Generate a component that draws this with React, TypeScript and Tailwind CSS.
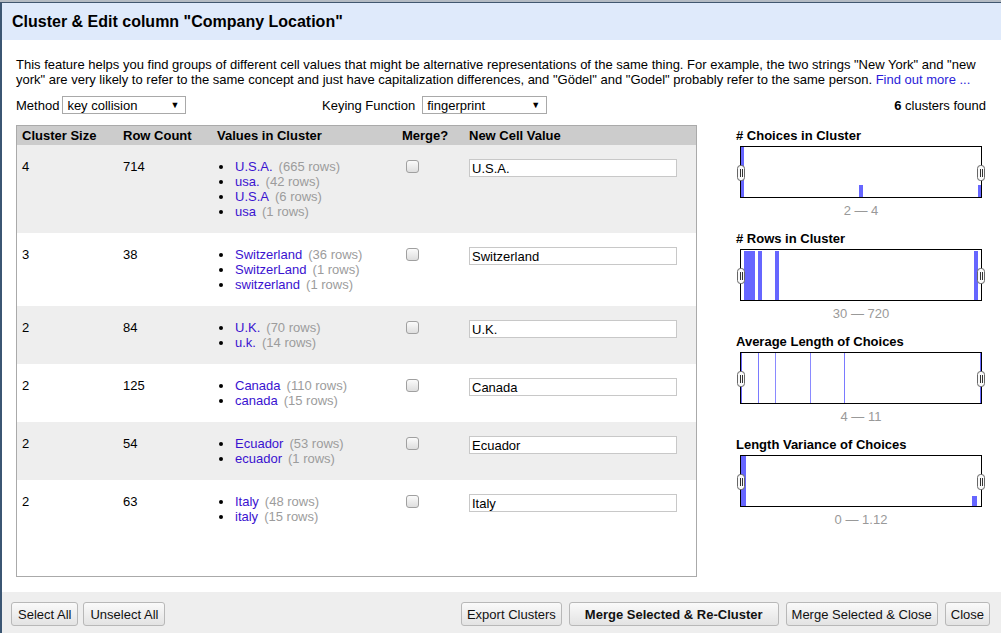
import React from 'react';

type Item = { v: string; n: number };
type Cluster = { size: number; rows: number; items: Item[]; value: string; bg: string };

const clusters: Cluster[] = [
  {
    size: 4,
    rows: 714,
    value: 'U.S.A.',
    bg: 'bg-[#eeeeee]',
    items: [
      { v: 'U.S.A.', n: 665 },
      { v: 'usa.', n: 42 },
      { v: 'U.S.A', n: 6 },
      { v: 'usa', n: 1 },
    ],
  },
  {
    size: 3,
    rows: 38,
    value: 'Switzerland',
    bg: 'bg-white',
    items: [
      { v: 'Switzerland', n: 36 },
      { v: 'SwitzerLand', n: 1 },
      { v: 'switzerland', n: 1 },
    ],
  },
  {
    size: 2,
    rows: 84,
    value: 'U.K.',
    bg: 'bg-[#eeeeee]',
    items: [
      { v: 'U.K.', n: 70 },
      { v: 'u.k.', n: 14 },
    ],
  },
  {
    size: 2,
    rows: 125,
    value: 'Canada',
    bg: 'bg-white',
    items: [
      { v: 'Canada', n: 110 },
      { v: 'canada', n: 15 },
    ],
  },
  {
    size: 2,
    rows: 54,
    value: 'Ecuador',
    bg: 'bg-[#eeeeee]',
    items: [
      { v: 'Ecuador', n: 53 },
      { v: 'ecuador', n: 1 },
    ],
  },
  {
    size: 2,
    rows: 63,
    value: 'Italy',
    bg: 'bg-white',
    items: [
      { v: 'Italy', n: 48 },
      { v: 'italy', n: 15 },
    ],
  },
];

type Bar = { x: number; w: number; y: number; h: number; fill?: string };

const charts: { title: string; range: string; bars: Bar[] }[] = [
  {
    title: '# Choices in Cluster',
    range: '2 — 4',
    bars: [
      { x: 5, w: 3, y: 1, h: 50 },
      { x: 123, w: 4, y: 39, h: 12 },
      { x: 242, w: 3, y: 39, h: 12 },
    ],
  },
  {
    title: '# Rows in Cluster',
    range: '30 — 720',
    bars: [
      { x: 8, w: 11, y: 2, h: 49 },
      { x: 22, w: 4, y: 2, h: 49 },
      { x: 39, w: 4, y: 2, h: 49 },
      { x: 238, w: 4, y: 2, h: 49 },
    ],
  },
  {
    title: 'Average Length of Choices',
    range: '4 — 11',
    bars: [
      { x: 5, w: 1, y: 1, h: 50, fill: '#6a6aff' },
      { x: 22, w: 1, y: 1, h: 50, fill: '#7a7aff' },
      { x: 39, w: 1, y: 1, h: 50, fill: '#8a8aff' },
      { x: 74, w: 1, y: 1, h: 50, fill: '#8a8aff' },
      { x: 108, w: 1, y: 1, h: 50, fill: '#7a7aff' },
      { x: 244, w: 1, y: 1, h: 50, fill: '#6a6aff' },
    ],
  },
  {
    title: 'Length Variance of Choices',
    range: '0 — 1.12',
    bars: [
      { x: 5, w: 5, y: 1, h: 50 },
      { x: 236, w: 5, y: 41, h: 10 },
    ],
  },
];

const Handle = ({ x }: { x: number }) => (
  <g>
    <rect x={x + 0.5} y={19.5} width={7} height={15} rx={3} fill="#fafafa" stroke="#666" />
    <line x1={x + 3.5} y1={23} x2={x + 3.5} y2={31} stroke="#333" />
    <line x1={x + 5.5} y1={23} x2={x + 5.5} y2={31} stroke="#333" />
  </g>
);

const Histogram = ({ bars }: { bars: Bar[] }) => (
  <svg width={252} height={52} className="block">
    <rect x={4.5} y={0.5} width={241} height={51} fill="#fff" stroke="#000" />
    {bars.map((b, i) => (
      <rect key={i} x={b.x} y={b.y} width={b.w} height={b.h} fill={b.fill ?? '#6666ff'} />
    ))}
    <Handle x={1} />
    <Handle x={241} />
  </svg>
);

const Checkbox = () => (
  <div className="w-[13px] h-[13px] rounded-[3px] border border-[#a0a0a0] bg-linear-to-b from-[#fbfbfb] to-[#dedede]" />
);

const Select = ({ label, width }: { label: string; width: string }) => (
  <div className={`${width} h-[18px] border border-[#a9a9a9] bg-white flex items-center pl-[4px] pr-[6px]`}>
    <span className="flex-1">{label}</span>
    <span className="text-[9px] leading-none">▼</span>
  </div>
);

const Button = ({ children, bold, pad = 'px-[5px]' }: { children: React.ReactNode; bold?: boolean; pad?: string }) => (
  <button
    className={`h-[24px] ${pad} ${bold ? 'font-bold' : ''} border border-[#b8b8b8] rounded-[3px] bg-linear-to-b from-[#fafafa] to-[#e3e3e3] text-[13px] leading-[15px] text-[#111]`}
  >
    {children}
  </button>
);

const App = () => {
  return (
    <div className="w-[1001px] h-[633px] overflow-hidden flex flex-col bg-white text-[13px] leading-[15px] text-black font-['Liberation_Sans',Arial,sans-serif]">
      <div className="h-[2px] bg-[#b4bbc3] shrink-0" />
      <div className="h-px bg-[#41576f] shrink-0" />
      <div className="flex-1 flex flex-col border-l-2 border-[#3b5673]">
        <div className="h-[37px] bg-[#dfeafb] flex items-center pl-[10px] shrink-0">
          <span className="text-[16px] font-bold leading-[18px]">Cluster &amp; Edit column "Company Location"</span>
        </div>

        <div className="flex-1 pl-[14px] pr-[13px] pt-[17px]">
          <div className="whitespace-nowrap">
            This feature helps you find groups of different cell values that might be alternative representations of the same thing. For example, the two strings "New York" and "new
            <br />
            york" are very likely to refer to the same concept and just have capitalization differences, and "Gödel" and "Godel" probably refer to the same person.{' '}
            <span className="text-[#2a1bd8]">Find out more ...</span>
          </div>

          <div className="flex items-center mt-[9px] h-[18px]">
            <div className="w-[306px] flex items-center">
              <span>Method</span>
              <div className="ml-[3px]">
                <Select label="key collision" width="w-[124px]" />
              </div>
            </div>
            <span>Keying Function</span>
            <div className="ml-[7px]">
              <Select label="fingerprint" width="w-[125px]" />
            </div>
            <div className="ml-auto pr-[2px]">
              <b>6</b> clusters found
            </div>
          </div>

          <div className="flex mt-[11px]">
            <div className="w-[681px] h-[452px] border border-[#aaaaaa] overflow-hidden">
              <div className="grid grid-cols-[101px_94px_185px_67px_1fr] h-[19px] bg-[#cccccc] font-bold items-center">
                <div className="pl-[5px]">Cluster Size</div>
                <div className="pl-[5px]">Row Count</div>
                <div className="pl-[5px]">Values in Cluster</div>
                <div className="pl-[5px]">Merge?</div>
                <div className="pl-[5px]">New Cell Value</div>
              </div>
              {clusters.map((c, i) => (
                <div key={i} className={`grid grid-cols-[101px_94px_185px_67px_1fr] py-[14px] ${c.bg}`}>
                  <div className="pl-[5px]">{c.size}</div>
                  <div className="pl-[5px]">{c.rows}</div>
                  <div className="pl-[5px]">
                    {c.items.map((it, j) => (
                      <div key={j} className="flex items-center">
                        <span className="w-[18px] flex items-center">
                          <span className="ml-[2px] w-[4px] h-[4px] rounded-full bg-black" />
                        </span>
                        <span className="text-[#3a12d0]">{it.v}</span>
                        <span className="ml-[6px] text-[#9c9c9c]">({it.n} rows)</span>
                      </div>
                    ))}
                  </div>
                  <div className="pl-[9px] pt-px">
                    <Checkbox />
                  </div>
                  <div className="pl-[5px]">
                    <input
                      readOnly
                      value={c.value}
                      className="block w-[208px] h-[18px] border border-[#c8c8c8] bg-white px-[2px] text-[13px] leading-[15px] outline-none"
                    />
                  </div>
                </div>
              ))}
            </div>

            <div className="ml-[39px] w-[252px] pt-[3px]">
              {charts.map((ch, i) => (
                <div key={i} className="pb-[13px]">
                  <div className="font-bold">{ch.title}</div>
                  <div className="mt-[3px]">
                    <Histogram bars={ch.bars} />
                  </div>
                  <div className="mt-[5px] text-center text-[#999999] pr-[2px]">{ch.range}</div>
                </div>
              ))}
            </div>
          </div>
        </div>

        <div className="h-[41px] bg-[#eeeeee] flex items-start pt-[10px] pl-[9px] pr-[11px] shrink-0">
          <div className="flex gap-[5px]">
            <Button pad="px-[6px]">Select All</Button>
            <Button pad="px-[6px]">Unselect All</Button>
          </div>
          <div className="ml-auto flex gap-[7px]">
            <Button>Export Clusters</Button>
            <Button bold pad="px-[15px]">
              Merge Selected &amp; Re-Cluster
            </Button>
            <Button>Merge Selected &amp; Close</Button>
            <Button>Close</Button>
          </div>
        </div>
      </div>
    </div>
  );
};

export default App;
